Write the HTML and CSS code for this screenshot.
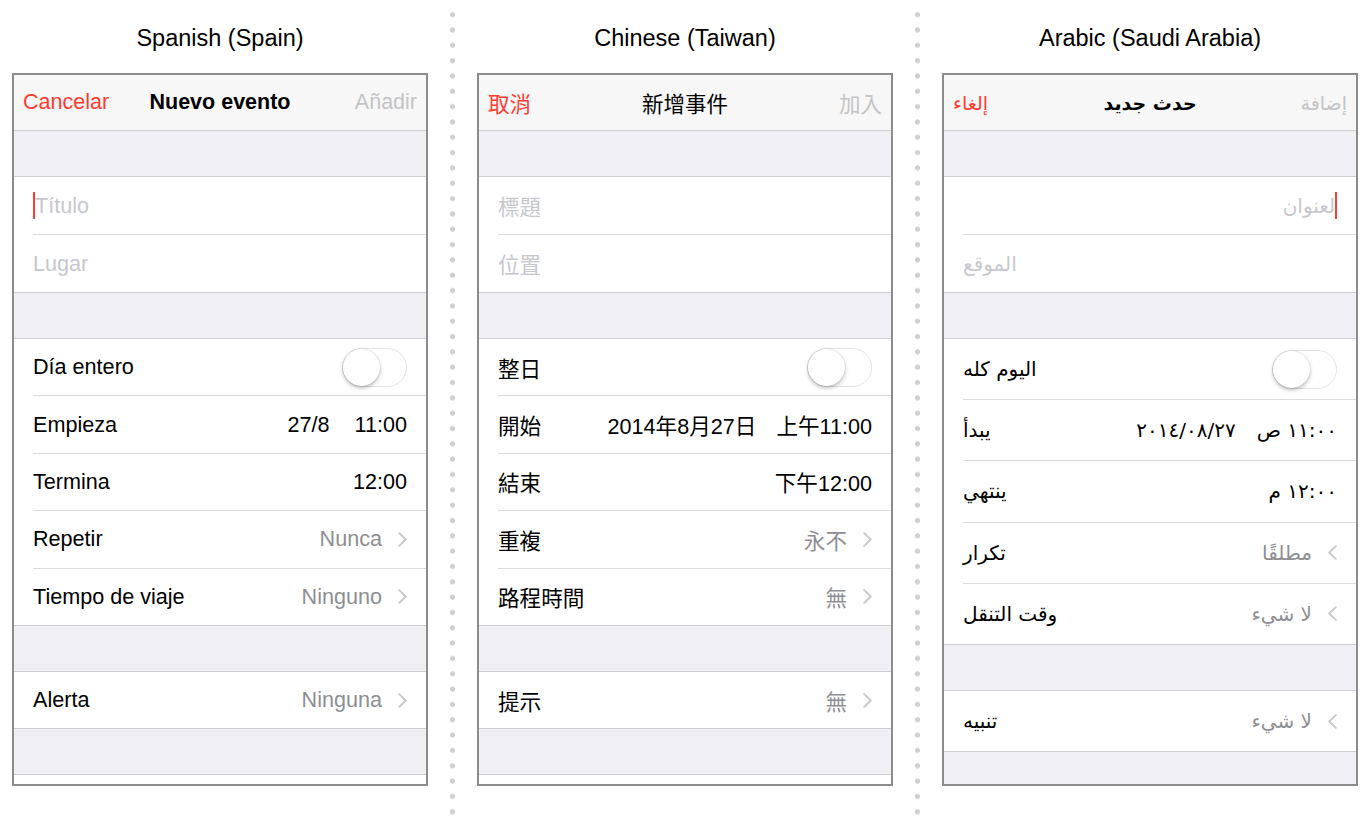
FILE: index.html
```html
<!DOCTYPE html>
<html lang="en">
<head>
<meta charset="utf-8">
<title>New Event – localisations</title>
<link rel="stylesheet" href="styles.css">
</head>
<body>
<div class="page">
  <section class="col">
    <h2 class="col-title">Spanish (Spain)</h2>
    <div class="phone">
      <div class="nav">
        <span class="nav-left">Cancelar</span>
        <span class="nav-title">Nuevo evento</span>
        <span class="nav-right">Añadir</span>
      </div>
      <div class="gap"></div>
      <div class="group">
        <div class="row field"><span class="cursor"></span><span class="ph">Título</span></div>
        <div class="row field"><span class="ph">Lugar</span></div>
      </div>
      <div class="gap"></div>
      <div class="group">
        <div class="row"><span class="label">Día entero</span><span class="toggle"><span class="knob"></span></span></div>
        <div class="row"><span class="label">Empieza</span><span class="value">27/8</span><span class="value">11:00</span></div>
        <div class="row"><span class="label">Termina</span><span class="value">12:00</span></div>
        <div class="row"><span class="label">Repetir</span><span class="value muted">Nunca</span><svg class="chev" viewBox="0 0 9 15"><polyline points="1.2,1.2 7.8,7.5 1.2,13.8"/></svg></div>
        <div class="row"><span class="label">Tiempo de viaje</span><span class="value muted">Ninguno</span><svg class="chev" viewBox="0 0 9 15"><polyline points="1.2,1.2 7.8,7.5 1.2,13.8"/></svg></div>
      </div>
      <div class="gap"></div>
      <div class="group">
        <div class="row"><span class="label">Alerta</span><span class="value muted">Ninguna</span><svg class="chev" viewBox="0 0 9 15"><polyline points="1.2,1.2 7.8,7.5 1.2,13.8"/></svg></div>
      </div>
      <div class="gap"></div>
      <div class="group stub"></div>
    </div>
  </section>

  <div class="sep"></div>

  <section class="col zh" lang="zh-Hant">
    <h2 class="col-title" lang="en">Chinese (Taiwan)</h2>
    <div class="phone">
      <div class="nav">
        <span class="nav-left">取消</span>
        <span class="nav-title">新增事件</span>
        <span class="nav-right">加入</span>
      </div>
      <div class="gap"></div>
      <div class="group">
        <div class="row field"><span class="ph">標題</span></div>
        <div class="row field"><span class="ph">位置</span></div>
      </div>
      <div class="gap"></div>
      <div class="group">
        <div class="row"><span class="label">整日</span><span class="toggle"><span class="knob"></span></span></div>
        <div class="row"><span class="label">開始</span><span class="value">2014年8月27日</span><span class="value tight">上午11:00</span></div>
        <div class="row"><span class="label">結束</span><span class="value">下午12:00</span></div>
        <div class="row"><span class="label">重複</span><span class="value muted">永不</span><svg class="chev" viewBox="0 0 9 15"><polyline points="1.2,1.2 7.8,7.5 1.2,13.8"/></svg></div>
        <div class="row"><span class="label">路程時間</span><span class="value muted">無</span><svg class="chev" viewBox="0 0 9 15"><polyline points="1.2,1.2 7.8,7.5 1.2,13.8"/></svg></div>
      </div>
      <div class="gap"></div>
      <div class="group">
        <div class="row"><span class="label">提示</span><span class="value muted">無</span><svg class="chev" viewBox="0 0 9 15"><polyline points="1.2,1.2 7.8,7.5 1.2,13.8"/></svg></div>
      </div>
      <div class="gap"></div>
      <div class="group stub"></div>
    </div>
  </section>

  <div class="sep"></div>

  <section class="col ar" lang="ar">
    <h2 class="col-title" lang="en">Arabic (Saudi Arabia)</h2>
    <div class="phone">
      <div class="nav">
        <span class="nav-left" dir="rtl">إلغاء</span>
        <span class="nav-title" dir="rtl">حدث جديد</span>
        <span class="nav-right" dir="rtl">إضافة</span>
      </div>
      <div class="gap"></div>
      <div class="group">
        <div class="row field end"><span class="ph" dir="rtl">لعنوان</span><span class="cursor"></span></div>
        <div class="row field"><span class="ph" dir="rtl">الموقع</span></div>
      </div>
      <div class="gap"></div>
      <div class="group">
        <div class="row"><span class="label" dir="rtl">اليوم كله</span><span class="toggle"><span class="knob"></span></span></div>
        <div class="row"><span class="label" dir="rtl">يبدأ</span><span class="value num">٢٠١٤/٠٨/٢٧</span><span class="value tighter" dir="rtl">١١:٠٠ ص</span></div>
        <div class="row"><span class="label" dir="rtl">ينتهي</span><span class="value" dir="rtl">١٢:٠٠ م</span></div>
        <div class="row"><span class="label" dir="rtl">تكرار</span><span class="value muted" dir="rtl">مطلقًا</span><svg class="chev" viewBox="0 0 9 15"><polyline points="7.8,1.2 1.2,7.5 7.8,13.8"/></svg></div>
        <div class="row"><span class="label" dir="rtl">وقت التنقل</span><span class="value muted" dir="rtl">لا شيء</span><svg class="chev" viewBox="0 0 9 15"><polyline points="7.8,1.2 1.2,7.5 7.8,13.8"/></svg></div>
      </div>
      <div class="gap"></div>
      <div class="group">
        <div class="row"><span class="label" dir="rtl">تنبيه</span><span class="value muted" dir="rtl">لا شيء</span><svg class="chev" viewBox="0 0 9 15"><polyline points="7.8,1.2 1.2,7.5 7.8,13.8"/></svg></div>
      </div>
    </div>
  </section>
</div>
</body>
</html>
```

FILE: styles.css
```css
* { box-sizing: border-box; }

html, body {
  margin: 0;
  padding: 0;
  background: #ffffff;
}

body {
  font-family: "Liberation Sans", Arial, sans-serif;
  color: #000;
  width: 1371px;
  height: 828px;
  overflow: hidden;
}

.page {
  display: flex;
  align-items: flex-start;
  padding-left: 12px;
}

.col {
  width: 416px;
  flex: none;
}

.col-title {
  margin: 0;
  height: 73px;
  padding-top: 24px;
  font-size: 23.5px;
  line-height: 28px;
  font-weight: normal;
  text-align: center;
  color: #000;
}

.sep {
  width: 49px;
  flex: none;
  margin-top: 7.33px;
  height: 812.5px;
  background-image: radial-gradient(circle at center, #cfcfcf 0, #cfcfcf 2.2px, rgba(207,207,207,0) 2.9px);
  background-size: 49px 15.33px;
  background-repeat: repeat-y;
  background-position: center top;
}

.phone {
  height: 713px;
  border: 2px solid #8c8c8c;
  background: #efeff4;
  overflow: hidden;
  display: flex;
  flex-direction: column;
}

.nav {
  flex: none;
  height: 56px;
  background: #f7f7f7;
  border-bottom: 1px solid #cfcfd3;
  display: grid;
  grid-template-columns: 1fr auto 1fr;
  align-items: center;
  padding: 0 9px;
  font-size: 21.5px;
}

.nav-left { justify-self: start; color: #ff3b30; }
.nav-title { justify-self: center; font-weight: bold; }
.nav-right { justify-self: end; color: #c4c4c6; }

.gap {
  flex: none;
  height: 45px;
}

.group {
  flex: none;
  background: #fff;
  border-top: 1px solid #cfcfd3;
  border-bottom: 1px solid #cfcfd3;
}

.group.stub {
  flex: 1;
  border-bottom: none;
}

.row {
  display: flex;
  align-items: center;
  height: 57.4px;
  margin-left: 19px;
  padding-right: 19px;
  border-bottom: 1px solid #dcdcdf;
  font-size: 21.6px;
}

.row:last-child {
  border-bottom: none;
  height: 56.4px;
}

.row.field { height: 58px; }
.row.field:last-child { height: 57px; }
.row.end { justify-content: flex-end; }

.ph { color: #c7c7cd; }

.cursor {
  width: 2px;
  height: 27px;
  background: #ff3b30;
  flex: none;
}

.label { flex: 1; white-space: nowrap; text-align: left; }

.value { white-space: nowrap; }
.value + .value { margin-left: 25px; }
.value.tight { margin-left: 20px; }
.muted { color: #8e8e93; }

.chev {
  width: 9px;
  height: 15px;
  margin-left: 16px;
  flex: none;
  fill: none;
  stroke: #c7c7cc;
  stroke-width: 1.8;
  stroke-linecap: round;
  stroke-linejoin: round;
}

.toggle {
  flex: none;
  width: 65px;
  height: 39px;
  border: 1.5px solid #e3e3e6;
  border-radius: 20px;
  background: #fff;
  display: flex;
  align-items: center;
}

.knob {
  width: 37px;
  height: 37px;
  margin-left: -0.5px;
  border-radius: 50%;
  background: #fff;
  box-shadow: 0 2px 4px rgba(0,0,0,0.28), 0 0 0 0.5px rgba(0,0,0,0.08);
}

/* Chinese */
.zh .nav, .zh .row {
  font-family: "Liberation Sans", "Noto Sans CJK TC", sans-serif;
}
.zh .nav-title { font-weight: normal; }

/* Arabic */
.ar .nav, .ar .row {
  font-family: "DejaVu Sans", "Liberation Sans", sans-serif;
}
.ar .nav { font-size: 19px; }
.ar .row { font-size: 20px; }
.ar .group .row:not(.field) { height: 61.2px; }
.ar .group .row:not(.field):last-child { height: 60.2px; }
.ar .value.tighter { margin-left: 21px; }
.ar .gap:last-of-type { height: 46px; }
```
